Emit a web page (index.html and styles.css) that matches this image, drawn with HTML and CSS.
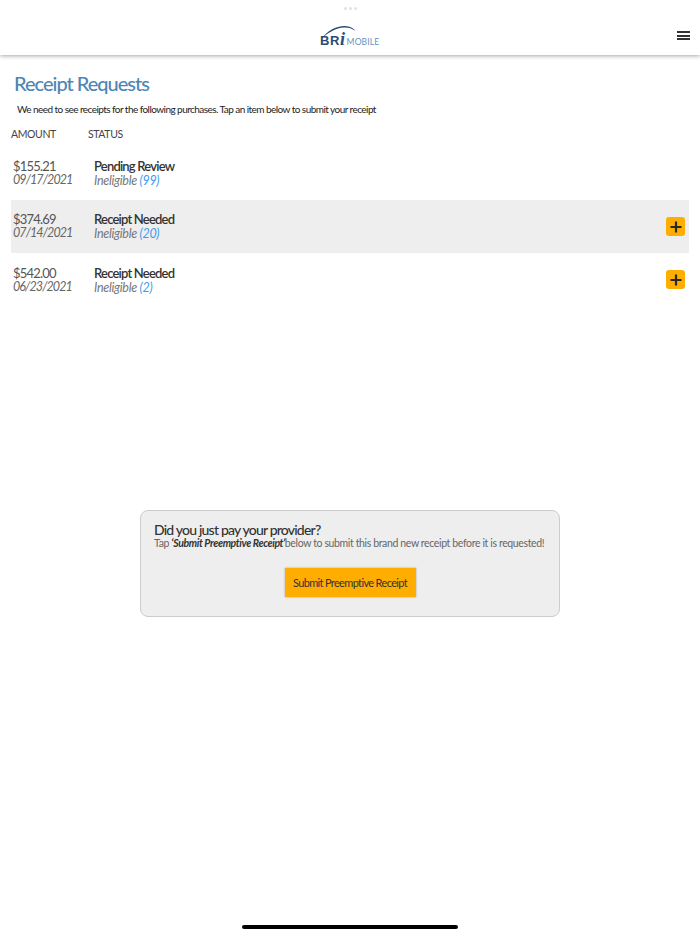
FILE: index.html
```html
<!DOCTYPE html>
<html lang="en">
<head>
<meta charset="utf-8">
<title>Receipt Requests</title>
<link rel="stylesheet" href="styles.css">
</head>
<body>
<div class="app">
  <header class="topbar">
    <div class="dots"><i></i><i></i><i></i></div>
    <div class="logo">
      <svg class="logo-arc" width="36" height="14" viewBox="0 0 36 14"><path d="M1 13.500C6 6 15 .8 24 1c5 .1 8.500 2 10.500 5C31 3.300 27 2.300 23 2.500 15 3 7 7.500 1 13.500Z" fill="#2b4a78"/></svg>
      <span class="logo-bri">BR<em>i</em></span><span class="logo-mobile">MOBILE</span>
    </div>
    <button class="menu" aria-label="Menu"><i></i><i></i><i></i></button>
  </header>
  <main class="content">
    <h1 class="title">Receipt Requests</h1>
    <p class="intro">We need to see receipts for the following purchases. Tap an item below to submit your receipt</p>
    <div class="cols"><span class="col-amount">AMOUNT</span><span>STATUS</span></div>
    <ul class="rows">
      <li class="row">
        <div class="amount"><span class="price">$155.21</span><span class="date">09/17/2021</span></div>
        <div class="status"><span class="state">Pending Review</span><span class="elig">Ineligible <b>(99)</b></span></div>
      </li>
      <li class="row shaded">
        <div class="amount"><span class="price">$374.69</span><span class="date">07/14/2021</span></div>
        <div class="status"><span class="state">Receipt Needed</span><span class="elig">Ineligible <b>(20)</b></span></div>
        <button class="plus" aria-label="Add receipt"><svg width="12" height="12" viewBox="0 0 12 12"><path d="M6 .5v11M.5 6h11" stroke="#2a2a22" stroke-width="2.200" fill="none"/></svg></button>
      </li>
      <li class="row last">
        <div class="amount"><span class="price">$542.00</span><span class="date">06/23/2021</span></div>
        <div class="status"><span class="state">Receipt Needed</span><span class="elig">Ineligible <b>(2)</b></span></div>
        <button class="plus" aria-label="Add receipt"><svg width="12" height="12" viewBox="0 0 12 12"><path d="M6 .5v11M.5 6h11" stroke="#2a2a22" stroke-width="2.200" fill="none"/></svg></button>
      </li>
    </ul>
    <section class="card">
      <h2 class="card-title">Did you just pay your provider?</h2>
      <p class="card-text">Tap <strong>‘Submit Preemptive Receipt’</strong>below to submit this brand new receipt before it is requested!</p>
      <button class="cta">Submit Preemptive Receipt</button>
    </section>
  </main>
  <div class="home-bar"></div>
</div>
</body>
</html>
```
FILE: styles.css
```css
* { box-sizing: border-box; }
html, body { margin: 0; padding: 0; }
body { background: #fff; font-family: Lato, "Open Sans", sans-serif; color: #333; }
.app { position: relative; width: 700px; height: 934px; overflow: hidden; }
.topbar { position: relative; height: 55px; background: #fff; box-shadow: 0 1px 4px rgba(0,0,0,.35); display: flex; justify-content: center; }
.dots { position: absolute; top: 7px; left: 344px; display: flex; gap: 2px; }
.dots i { width: 3px; height: 3px; border-radius: 50%; background: #e2e2e2; }
.logo { position: relative; margin-top: 25px; width: 60px; height: 24px; display: flex; align-items: flex-end; justify-content: flex-start; white-space: nowrap; line-height: 1; }
.logo-arc { position: absolute; left: 1px; top: 0; }
.logo-bri { font-family: "Liberation Sans", sans-serif; font-weight: 700; font-size: 13px; color: #2b4a78; letter-spacing: .6px; line-height: 16px; }
.logo-bri em { font-family: "Liberation Serif", serif; font-size: 18px; font-weight: 700; }
.logo-mobile { font-size: 8.500px; color: #5f93c4; line-height: 14px; margin-left: 1px; letter-spacing: .15px; }
.menu { position: absolute; top: 31px; right: 10px; width: 13px; height: 9px; padding: 0; border: 0; background: none; display: flex; flex-direction: column; justify-content: space-between; }
.menu i { display: block; height: 2px; background: #333; }
.content { padding: 0 11px; }
.title { margin: 16px 0 0 3px; font-size: 20px; line-height: 24px; font-weight: 500; letter-spacing: -1px; color: #4c86b3; }
.intro { margin: 7px 0 0 6px; font-size: 10px; line-height: 14px; letter-spacing: -.55px; color: #222; }
.cols { display: flex; margin-top: 11px; font-size: 10.500px; line-height: 14px; letter-spacing: -.4px; color: #444; }
.col-amount { width: 77px; }
.rows { list-style: none; margin: 6px 0 0; padding: 0; }
.row { height: 53px; display: flex; align-items: center; padding: 0 4px 0 2px; }
.shaded { background: #eee; }
.last .amount, .last .status { padding-top: 2px; }
.last .plus { margin-top: 0; }
.amount, .status { display: flex; flex-direction: column; }
.amount { width: 81px; margin-top: -3px; }
.price { font-size: 13px; line-height: 14px; letter-spacing: -.8px; color: #555; }
.date { font-size: 12.500px; line-height: 13px; letter-spacing: -.9px; font-style: italic; color: #666; }
.state { font-size: 13px; line-height: 15px; font-weight: 600; letter-spacing: -.8px; color: #333; }
.elig { font-size: 12.500px; line-height: 14px; font-style: italic; letter-spacing: -.3px; color: #777; }
.elig b { font-weight: 400; color: #3f9be8; }
.status { flex: 1; }
.plus { width: 19px; height: 19px; padding: 0; border: 0; border-radius: 3px; background: #ffad00; display: flex; align-items: center; justify-content: center; }
.card { width: 420px; height: 107px; margin: 204px auto 0; padding: 11px 13px 0; background: #eee; border: 1px solid #ccc; border-radius: 8px; }
.card-title { margin: 0; font-size: 14px; line-height: 15px; font-weight: 500; letter-spacing: -.8px; color: #333; }
.card-text { margin: 0; font-size: 10.500px; line-height: 12px; letter-spacing: -.37px; color: #666; white-space: nowrap; }
.card-text strong { font-weight: 700; font-style: italic; color: #333; }
.cta { display: block; width: 131px; height: 29px; margin: 19px auto 0; padding: 0; border: 0; background: #ffad00; font: 400 11px Lato, sans-serif; letter-spacing: -.65px; color: #333; box-shadow: 0 0 2px rgba(0,0,0,.3); }
.home-bar { position: absolute; left: 242px; top: 925px; width: 216px; height: 4px; border-radius: 2px; background: #000; }
```
